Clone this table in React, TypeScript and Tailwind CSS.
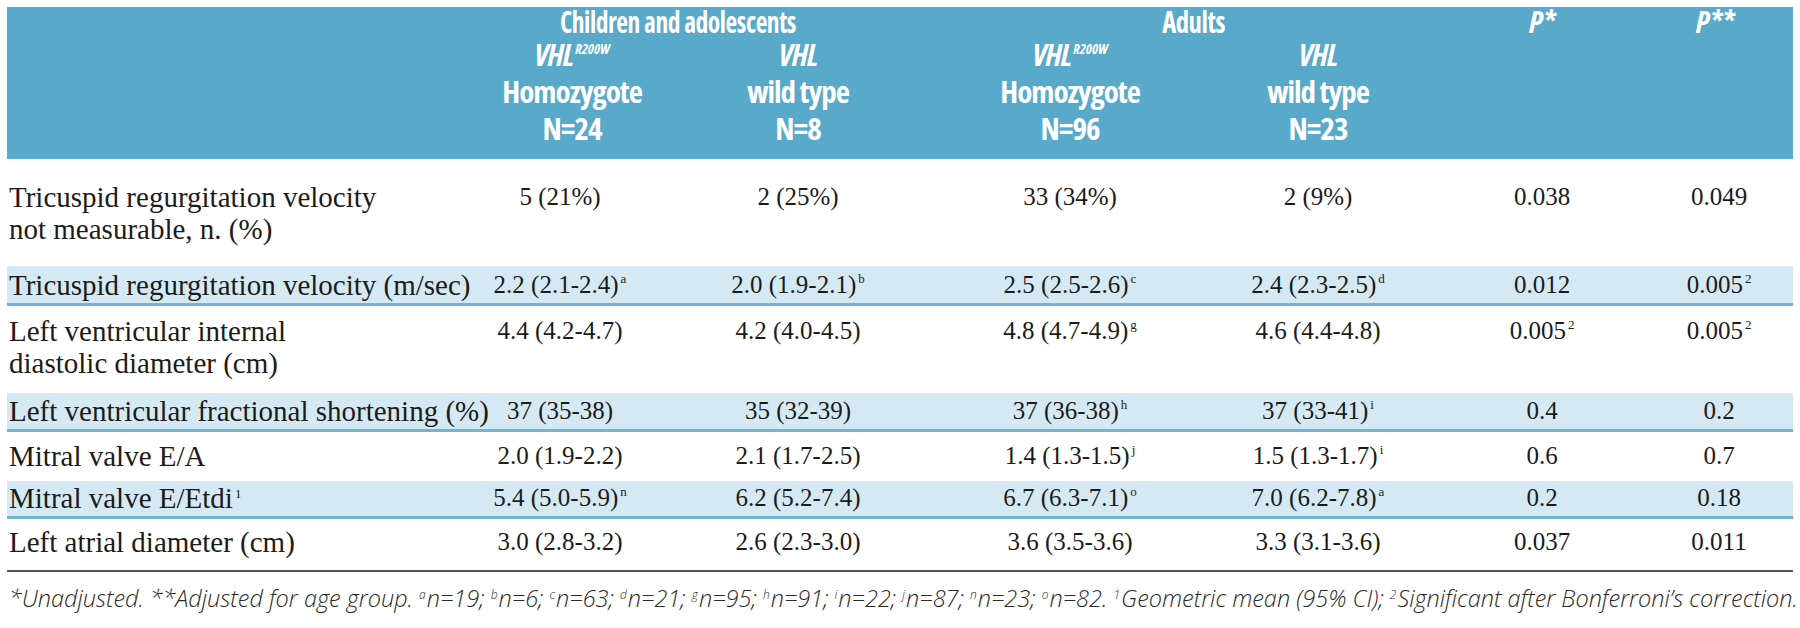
import React from "react";

const serif = { fontFamily: '"Liberation Serif", "Times New Roman", serif' };

type Cell = { v: string; s?: string };
type Row = { label: string[]; sup?: string; cells: Cell[]; shaded?: boolean; h: string; pt: string };

const rows: Row[] = [
  {
    label: ["Tricuspid regurgitation velocity", "not measurable, n. (%)"],
    cells: [{ v: "5 (21%)" }, { v: "2 (25%)" }, { v: "33 (34%)" }, { v: "2 (9%)" }, { v: "0.038" }, { v: "0.049" }],
    h: "h-[107px]",
    pt: "pt-[22px]",
  },
  {
    label: ["Tricuspid regurgitation velocity (m/sec)"],
    cells: [
      { v: "2.2 (2.1-2.4)", s: "a" },
      { v: "2.0 (1.9-2.1)", s: "b" },
      { v: "2.5 (2.5-2.6)", s: "c" },
      { v: "2.4 (2.3-2.5)", s: "d" },
      { v: "0.012" },
      { v: "0.005", s: "2" },
    ],
    shaded: true,
    h: "h-[40px]",
    pt: "pt-[3px]",
  },
  {
    label: ["Left ventricular internal", "diastolic diameter (cm)"],
    cells: [
      { v: "4.4 (4.2-4.7)" },
      { v: "4.2 (4.0-4.5)" },
      { v: "4.8 (4.7-4.9)", s: "g" },
      { v: "4.6 (4.4-4.8)" },
      { v: "0.005", s: "2" },
      { v: "0.005", s: "2" },
    ],
    h: "h-[87px]",
    pt: "pt-[9px]",
  },
  {
    label: ["Left ventricular fractional shortening (%)"],
    cells: [
      { v: "37 (35-38)" },
      { v: "35 (32-39)" },
      { v: "37 (36-38)", s: "h" },
      { v: "37 (33-41)", s: "i" },
      { v: "0.4" },
      { v: "0.2" },
    ],
    shaded: true,
    h: "h-[39px]",
    pt: "pt-[2px]",
  },
  {
    label: ["Mitral valve E/A"],
    cells: [
      { v: "2.0 (1.9-2.2)" },
      { v: "2.1 (1.7-2.5)" },
      { v: "1.4 (1.3-1.5)", s: "j" },
      { v: "1.5 (1.3-1.7)", s: "i" },
      { v: "0.6" },
      { v: "0.7" },
    ],
    h: "h-[49px]",
    pt: "pt-[8px]",
  },
  {
    label: ["Mitral valve E/Etdi"],
    sup: "1",
    cells: [
      { v: "5.4 (5.0-5.9)", s: "n" },
      { v: "6.2 (5.2-7.4)" },
      { v: "6.7 (6.3-7.1)", s: "o" },
      { v: "7.0 (6.2-7.8)", s: "a" },
      { v: "0.2" },
      { v: "0.18" },
    ],
    shaded: true,
    h: "h-[38px]",
    pt: "pt-[1px]",
  },
  {
    label: ["Left atrial diameter (cm)"],
    cells: [
      { v: "3.0 (2.8-3.2)" },
      { v: "2.6 (2.3-3.0)" },
      { v: "3.6 (3.5-3.6)" },
      { v: "3.3 (3.1-3.6)" },
      { v: "0.037" },
      { v: "0.011" },
    ],
    h: "h-[51px]",
    pt: "pt-[7px]",
  },
];

const cols = "grid grid-cols-[433px_240px_236px_308px_188px_260px_94px]";

function Sup({ t }: { t: string }) {
  return <sup className="text-[13px] top-[-10px] leading-none ml-[2px]">{t}</sup>;
}

function FSup({ t }: { t: string }) {
  return <sup className="text-[12px] top-[-8px] leading-none mr-[1px]">{t}</sup>;
}

function HeadCell({ n, hom, extra }: { n: string; hom: boolean; extra?: string }) {
  return (
    <div className={`flex flex-col items-center leading-[37px] tracking-[-1px] ${extra ?? ""}`}>
      <div>
        <span className="italic">VHL</span>
        {hom && <sup className="italic text-[14px] top-[-12px] leading-none ml-[2px] tracking-normal">R200W</sup>}
      </div>
      <div>{hom ? "Homozygote" : "wild type"}</div>
      <div>N={n}</div>
    </div>
  );
}

export default function App() {
  return (
    <div className="w-[1800px] h-[628px] bg-white pt-[7px] pl-[7px] pr-[7px] text-[#1b1b1b]">
      <div
        className={`${cols} grid-rows-[29px_111px] bg-[#59a9ca] text-white font-bold text-[31px] h-[152px] font-stretch-condensed`}
        style={{ fontFamily: '"Open Sans", "DejaVu Sans Condensed", "Liberation Sans", sans-serif' }}
      >
        <div />
        <div className="col-span-2 text-center leading-[29px]">
          <span className="inline-block scale-x-[0.82] tracking-[-0.5px]">Children and adolescents</span>
        </div>
        <div className="col-span-2 text-center leading-[29px] pl-[60px]">
          <span className="inline-block scale-x-[0.86] tracking-[-0.5px]">Adults</span>
        </div>
        <div className="text-center leading-[29px] italic">P*</div>
        <div className="text-center leading-[29px] italic pr-[8px]">P**</div>
        <div />
        <HeadCell n="24" hom extra="pl-[24px]" />
        <HeadCell n="8" hom={false} />
        <HeadCell n="96" hom />
        <HeadCell n="23" hom={false} />
        <div />
        <div />
      </div>
      {rows.map((r, i) => (
        <div
          key={i}
          className={`${cols} ${r.h} ${r.pt} leading-[32px] ${
            r.shaded ? "bg-[#d5e9f4] border-b-[3px] border-[#6fb5d5]" : ""
          }`}
          style={serif}
        >
          <div className="pl-[2px] whitespace-nowrap text-[29px]">
            {r.label.map((l, j) => (
              <div key={j}>
                {l}
                {r.sup && <Sup t={r.sup} />}
              </div>
            ))}
          </div>
          {r.cells.map((c, j) => (
            <div key={j} className="text-center whitespace-nowrap text-[25px]">
              {c.v}
              {c.s && <Sup t={c.s} />}
            </div>
          ))}
        </div>
      ))}
      <div className="border-t-2 border-[#555]" />
      <div
        className="pl-[2px] pt-[11px] italic font-light text-[23.5px] leading-[30px] whitespace-nowrap text-[#2a2a2a]"
        style={{ fontFamily: '"Open Sans", "Liberation Sans", sans-serif' }}
      >
        *Unadjusted. **Adjusted for age group. <FSup t="a" />n=19; <FSup t="b" />n=6; <FSup t="c" />n=63; <FSup t="d" />
        n=21; <FSup t="g" />n=95; <FSup t="h" />n=91; <FSup t="i" />n=22; <FSup t="j" />n=87; <FSup t="n" />n=23;{" "}
        <FSup t="o" />n=82. <FSup t="1" />Geometric mean (95% CI); <FSup t="2" />Significant after Bonferroni’s correction.
      </div>
    </div>
  );
}
